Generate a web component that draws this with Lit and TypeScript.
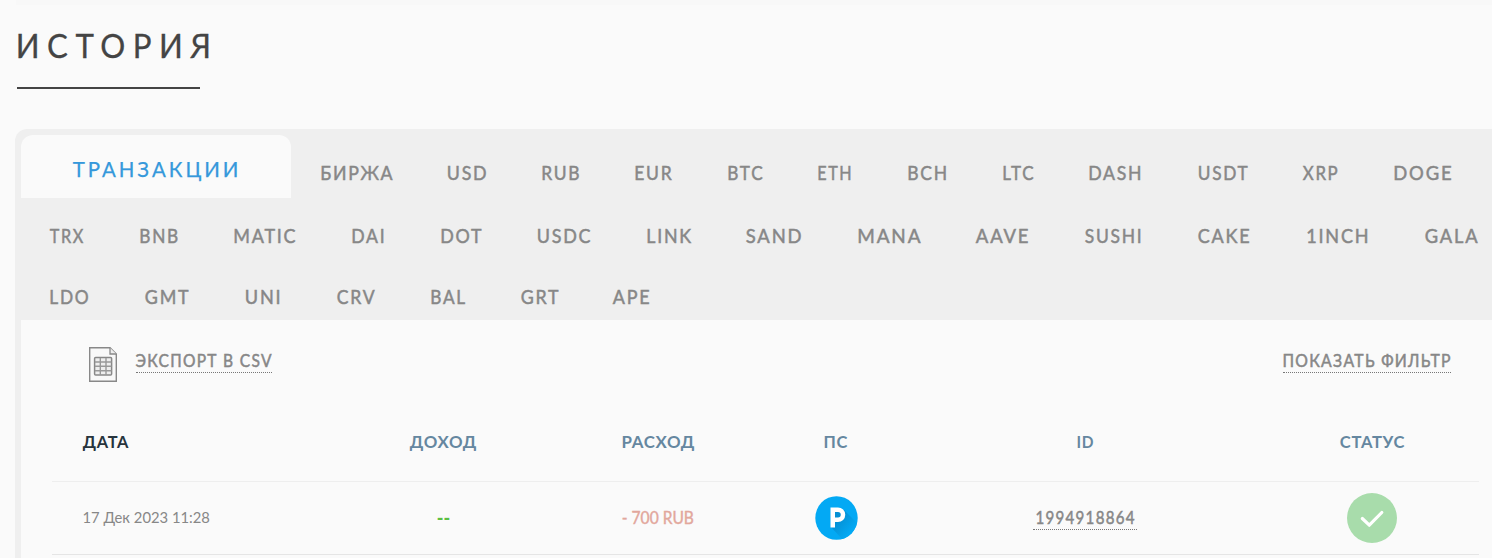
import { LitElement, html, css, svg } from "lit";
import { customElement } from "lit/decorators.js";

type Tab = [label: string, textWidth: number, advance: number];

const ROW_1: Tab[] = [
  ["БИРЖА", 72, 126.5], ["USD", 40, 95], ["RUB", 38, 93], ["EUR", 37, 93],
  ["BTC", 35, 90], ["ETH", 34, 89.5], ["BCH", 39.5, 95.5], ["LTC", 31, 86],
  ["DASH", 53, 109], ["USDT", 50, 105], ["XRP", 35, 91], ["DOGE", 58, 58],
];
const ROW_2: Tab[] = [
  ["TRX", 33.5, 89.5], ["BNB", 38.5, 94.5], ["MATIC", 62, 118], ["DAI", 33, 89],
  ["DOT", 41, 96], ["USDC", 54, 109.5], ["LINK", 44.5, 99.5], ["SAND", 56, 112],
  ["MANA", 63, 118], ["AAVE", 53, 109], ["SUSHI", 57, 113], ["CAKE", 52, 109],
  ["1INCH", 62, 118], ["GALA", 53, 53],
];
const ROW_3: Tab[] = [
  ["LDO", 39, 95], ["GMT", 44, 100], ["UNI", 36, 92], ["CRV", 38, 94],
  ["BAL", 34.5, 90], ["GRT", 38, 92], ["APE", 37, 37],
];

/** Caps label whose box is exactly its cap height by its text width. */
const label = (text: string, width: number, cap: number, spacing: number, cls: string) => {
  const left = /^[TXAСТДАUCGSO-]/.test(text) ? 0.2 : cap * 0.05;
  return html`<svg class="label ${cls}" width=${width} height=${cap}>
    ${svg`<text x=${-left} y=${cap} font-size=${cap / 0.717} letter-spacing=${spacing}
      textLength=${width + left + spacing - 0.6} lengthAdjust="spacingAndGlyphs">${text}</text>`}
  </svg>`;
};

@customElement("app-root")
export class AppRoot extends LitElement {
  static styles = css`
    :host {
      display: block;
      box-sizing: border-box;
      height: 558px;
      overflow: hidden;
      background: #fafafa;
      font-family: Lato, "Open Sans", sans-serif;
    }
    svg { display: block; flex: none; }
    .label { overflow: visible; }
    .label text { white-space: pre; }
    .strip { height: 5px; margin-left: 16px; background: #f8f8f8; }
    .title { margin: 29px 0 0 17px; }
    .rule { width: 183px; height: 2px; margin: 29px 0 40px 17px; background: #444; }
    .t-title { fill: #444; stroke: #444; stroke-width: 0.3px; }
    .t-active { fill: #3598db; stroke: #3598db; stroke-width: 0.25px; }
    .t-nav, .t-link { fill: #878787; stroke: #878787; stroke-width: 0.5px; }
    .t-head { fill: #6587a0; font-weight: 700; }
    .t-dark { fill: #27343d; font-weight: 700; }
    .t-date { fill: #878787; }
    .t-out { fill: #e2a79c; stroke: #e2a79c; stroke-width: 0.4px; }
    .panel {
      margin-left: 15px;
      height: 429px;
      box-sizing: border-box;
      padding: 6px 0 0 6px;
      border-radius: 12px 0 0 0;
      background: #efefef;
    }
    .tabs { height: 185px; }
    .row { display: flex; }
    .row1 { height: 63px; }
    .active {
      width: 270px;
      box-sizing: border-box;
      padding: 27px 0 0 52px;
      border-radius: 12px 12px 0 0;
      background: #fafafa;
    }
    .row1 .items { display: flex; padding: 31px 0 0 29.5px; }
    .row2 { padding: 31px 0 0 29px; height: 30px; }
    .row3 { padding: 31px 0 0 29px; }
    .item { flex: none; }
    .content { background: #fafafa; height: 238px; }
    .tools {
      display: flex;
      align-items: flex-start;
      justify-content: space-between;
      height: 90px;
      box-sizing: border-box;
      padding: 27px 41px 0 68px;
    }
    .export { display: flex; gap: 19px; align-items: flex-start; }
    .dotted { border-bottom: 1px dotted #777; }
    .link { margin-top: 8px; padding-bottom: 5px; }
    .table { margin: 0 13px 0 31px; }
    .tr { display: grid; grid-template-columns: 285px 213px 216px 140px 359px 214px; align-items: center; justify-items: center; }
    .tr > :first-child { justify-self: start; margin-left: 31px; }
    .thead { height: 71px; border-bottom: 1px solid #eee; align-items: start; }
    .thead > * { margin-top: 24.5px; }
    .tbody { height: 72px; border-bottom: 1px solid #e5e5e5; }
    .tbody .t-date { margin-bottom: 1px; }
    .id { padding: 0 2px 5px 3px; margin-top: 5px; margin-right: 2px; }
    .plus { color: #5bbf43; font-size: 18px; font-weight: 900; line-height: 20px; }
  `;

  private items(tabs: Tab[]) {
    return tabs.map(([text, width, advance]) => html`
      <div class="item" style="width:${advance}px">${label(text, width, 14, 1.9, "t-nav")}</div>`);
  }

  render() {
    return html`
      <div class="strip"></div>
      <div class="title">${label("ИСТОРИЯ", 194, 24, 8, "t-title")}</div>
      <div class="rule"></div>
      <div class="panel">
        <div class="tabs">
          <div class="row row1">
            <div class="active">${label("ТРАНЗАКЦИИ", 166, 15, 3, "t-active")}</div>
            <div class="items">${this.items(ROW_1)}</div>
          </div>
          <div class="row row2">${this.items(ROW_2)}</div>
          <div class="row row3">${this.items(ROW_3)}</div>
        </div>
        <div class="content">
          <div class="tools">
            <div class="export">
              <svg width="28" height="35" viewBox="0 0 28 35" fill="none" stroke="#888">
                <path d="M.7 .7H21L27.3 7V34.3H.7Z" fill="#f8f8f8" stroke-width="1.4" />
                <path d="M21 .7V7H27.3" fill="#eee" stroke-width="1.3" />
                <rect x="5.6" y="10.6" width="17" height="17.4" rx="1" fill="#eee" stroke-width="1.5" />
                <path d="M11.3 11V28M17 11V28M6 15H22.5M6 19.3H22.5M6 23.7H22.5" stroke="#999" stroke-width="1.4" />
              </svg>
              <div class="link dotted">${label("ЭКСПОРТ В CSV", 136, 12, 1.4, "t-link")}</div>
            </div>
            <div class="link dotted">${label("ПОКАЗАТЬ ФИЛЬТР", 168, 12, 1.4, "t-link")}</div>
          </div>
          <div class="table">
            <div class="tr thead">
              ${label("ДАТА", 46, 12.5, 0.7, "t-dark")}
              ${label("ДОХОД", 67, 12.5, 0.7, "t-head")}
              ${label("РАСХОД", 73, 12.5, 0.7, "t-head")}
              ${label("ПС", 24, 12.5, 0.9, "t-head")}
              ${label("ID", 17, 12.5, 0.9, "t-head")}
              ${label("СТАТУС", 65, 12.5, 0.7, "t-head")}
            </div>
            <div class="tr tbody">
              ${label("17 Дек 2023 11:28", 127.5, 11, 0, "t-date")}
              <span class="plus">--</span>
              ${label("- 700 RUB", 72.5, 12, 0, "t-out")}
              <svg width="43" height="44" viewBox="0 0 43 44">
                <defs>
                  <clipPath id="disc"><ellipse cx="21.5" cy="22" rx="21.2" ry="21.8" /></clipPath>
                  <linearGradient id="shade" x1="0" y1="0" x2="1" y2="1">
                    <stop offset="0.3" stop-color="#0590d4" />
                    <stop offset="0.75" stop-color="#03a9f4" />
                  </linearGradient>
                </defs>
                <g clip-path="url(#disc)">
                  <rect width="43" height="44" fill="#03a9f4" />
                  <path d="M29 14L43 28V44H28L16 31V12Z" fill="url(#shade)" />
                </g>
                <path fill="#fff" fill-rule="evenodd" d="M15.5 11.5H23A7.2 7.2 0 0 1 23 26H20V31.5H15.5ZM20 16V21.5H23A2.7 2.7 0 0 0 23 16Z" />
              </svg>
              <div class="id dotted">${label("1994918864", 99, 12, 1.4, "t-link")}</div>
              <svg width="50" height="50" viewBox="0 0 50 50">
                <circle cx="25" cy="25" r="25" fill="#a8dcab" />
                <path d="M15.3 25.5L22.3 32.2L34.8 19.5" fill="none" stroke="#fff" stroke-width="3.2" stroke-linecap="round" stroke-linejoin="round" />
              </svg>
            </div>
          </div>
        </div>
      </div>
    `;
  }
}
